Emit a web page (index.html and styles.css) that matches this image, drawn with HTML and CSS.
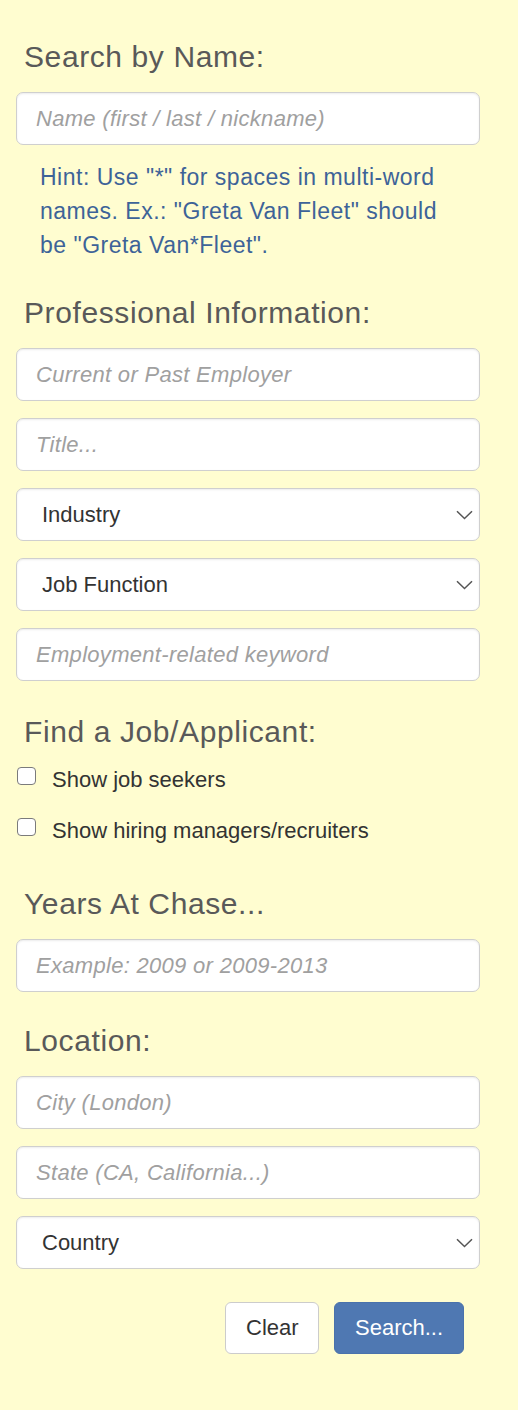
FILE: index.html
```html
<!DOCTYPE html>
<html lang="en">
<head>
<meta charset="utf-8">
<title>Search</title>
<link rel="stylesheet" href="styles.css">
</head>
<body>
<form class="panel">
  <section class="sec sec-name">
    <h3 class="heading">Search by Name:</h3>
    <input class="field" type="text" placeholder="Name (first / last / nickname)">
    <p class="hint">Hint: Use "*" for spaces in multi-word<br>names. Ex.: "Greta Van Fleet" should<br>be "Greta Van*Fleet".</p>
  </section>

  <section class="sec sec-pro">
    <h3 class="heading">Professional Information:</h3>
    <div class="stack">
      <input class="field" type="text" placeholder="Current or Past Employer">
      <input class="field" type="text" placeholder="Title...">
      <div class="select-wrap">
        <select class="field select"><option>Industry</option></select>
        <svg class="chev" width="17" height="10" viewBox="0 0 17 10"><polyline points="1,1.2 8.5,8.5 16,1.2" fill="none" stroke="#555" stroke-width="1.5"/></svg>
      </div>
      <div class="select-wrap">
        <select class="field select"><option>Job Function</option></select>
        <svg class="chev" width="17" height="10" viewBox="0 0 17 10"><polyline points="1,1.2 8.5,8.5 16,1.2" fill="none" stroke="#555" stroke-width="1.5"/></svg>
      </div>
      <input class="field" type="text" placeholder="Employment-related keyword">
    </div>
  </section>

  <section class="sec sec-job">
    <h3 class="heading heading-tight">Find a Job/Applicant:</h3>
    <label class="check-row"><input class="check" type="checkbox"><span>Show job seekers</span></label>
    <label class="check-row"><input class="check" type="checkbox"><span>Show hiring managers/recruiters</span></label>
  </section>

  <section class="sec sec-years">
    <h3 class="heading">Years At Chase...</h3>
    <input class="field" type="text" placeholder="Example: 2009 or 2009-2013">
  </section>

  <section class="sec sec-loc">
    <h3 class="heading">Location:</h3>
    <div class="stack">
      <input class="field" type="text" placeholder="City (London)">
      <input class="field" type="text" placeholder="State (CA, California...)">
      <div class="select-wrap">
        <select class="field select"><option>Country</option></select>
        <svg class="chev" width="17" height="10" viewBox="0 0 17 10"><polyline points="1,1.2 8.5,8.5 16,1.2" fill="none" stroke="#555" stroke-width="1.5"/></svg>
      </div>
    </div>
  </section>

  <div class="actions">
    <button class="btn btn-default" type="button">Clear</button>
    <button class="btn btn-primary" type="button">Search...</button>
  </div>
</form>
</body>
</html>
```

FILE: styles.css
```css
html, body {
  margin: 0;
  padding: 0;
  background: #fffdd0;
}

body {
  font-family: "Liberation Sans", Arial, Helvetica, sans-serif;
  color: #333;
  min-height: 1410px;
}

.panel {
  width: 464px;
  padding: 41px 0 0 16px;
  display: flex;
  flex-direction: column;
}

.sec {
  display: flex;
  flex-direction: column;
}

.sec-name { margin-bottom: 35px; }
.sec-pro { margin-bottom: 35px; }
.sec-job { margin-bottom: 42px; }
.sec-years { margin-bottom: 33px; }
.sec-loc { margin-bottom: 33px; }

.heading {
  margin: 0 0 19px 0;
  padding-left: 8px;
  font-size: 30px;
  line-height: 32px;
  height: 32px;
  font-weight: normal;
  letter-spacing: 0.6px;
  color: #595959;
}

.heading-tight { margin-bottom: 17px; }

.stack {
  display: flex;
  flex-direction: column;
  gap: 17px;
}

.field {
  box-sizing: border-box;
  width: 464px;
  height: 53px;
  margin: 0;
  padding: 0 19px;
  border: 1px solid #cfcfcf;
  border-radius: 7px;
  background: #fff;
  box-shadow: inset 0 1px 2px rgba(0, 0, 0, 0.08);
  font-family: "Liberation Sans", Arial, Helvetica, sans-serif;
  font-size: 22px;
  letter-spacing: 0.3px;
  color: #333;
  outline: none;
}

.field::placeholder {
  color: #a0a0a0;
  font-style: italic;
}

.select-wrap {
  position: relative;
  width: 464px;
  height: 53px;
}

.select {
  appearance: none;
  -webkit-appearance: none;
  padding-left: 25px;
  letter-spacing: 0;
  color: #333;
}

.chev {
  position: absolute;
  right: 7px;
  top: 22px;
  pointer-events: none;
}

.hint {
  margin: 15px 0 0 0;
  padding-left: 24px;
  font-size: 23px;
  line-height: 34px;
  letter-spacing: 0.5px;
  color: #3d6398;
}

.check-row {
  display: flex;
  align-items: flex-start;
  height: 30px;
  font-size: 22px;
  line-height: 30px;
  color: #333;
}

.check-row + .check-row { margin-top: 21px; }

.check {
  appearance: none;
  -webkit-appearance: none;
  box-sizing: border-box;
  width: 19px;
  height: 18px;
  margin: 2px 16px 0 1px;
  border: 1.5px solid #7b7b7b;
  border-radius: 4px;
  background: #fff;
  flex: none;
}

.actions {
  display: flex;
  justify-content: flex-end;
  gap: 15px;
  padding-right: 16px;
}

.btn {
  box-sizing: border-box;
  height: 52px;
  padding: 0 20px;
  border-radius: 6px;
  font-family: "Liberation Sans", Arial, Helvetica, sans-serif;
  font-size: 22px;
  line-height: 50px;
  cursor: pointer;
}

.btn-default {
  width: 94px;
  background: #fff;
  border: 1px solid #ccc;
  color: #333;
}

.btn-primary {
  width: 130px;
  background: #4f78b2;
  border: 1px solid #4a72ab;
  color: #fff;
}
```
